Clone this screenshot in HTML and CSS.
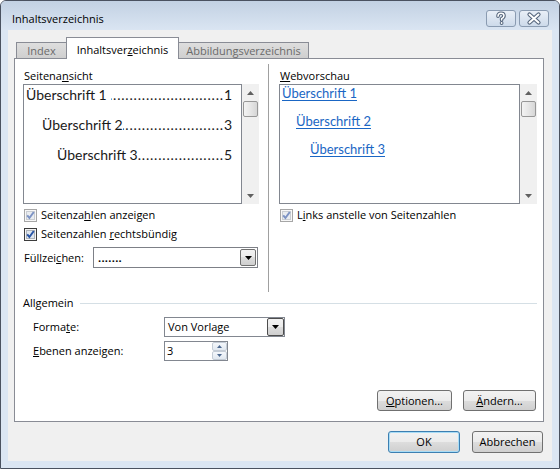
FILE: index.html
```html
<!DOCTYPE html>
<html lang="de">
<head>
<meta charset="utf-8">
<title>Inhaltsverzeichnis</title>
<link rel="stylesheet" href="styles.css">
</head>
<body>
<div class="window">
  <div class="titlebar">
    <span class="title">Inhaltsverzeichnis</span>
    <span class="tb-btn">
      <svg width="28" height="15" viewBox="0 0 28 15"><path d="M11 5.2Q11 2.2 14 2.2Q17 2.2 17 4.8Q17 6.6 14.6 7.6L14.6 9" fill="none" stroke="#56667c" stroke-width="3.6" stroke-linecap="round" stroke-linejoin="round"/><circle cx="14.6" cy="12" r="1.9" fill="#56667c"/><path d="M11 5.2Q11 2.2 14 2.2Q17 2.2 17 4.8Q17 6.6 14.6 7.6L14.6 9" fill="none" stroke="#fff" stroke-width="1.5" stroke-linecap="round" stroke-linejoin="round"/><circle cx="14.6" cy="12" r="0.9" fill="#fff"/></svg>
    </span>
    <span class="tb-btn">
      <svg width="28" height="15" viewBox="0 0 28 15"><path d="M9.5 3.5L18.5 11.5M18.5 3.5L9.5 11.5" stroke="#56667c" stroke-width="4.2" stroke-linecap="round"/><path d="M9.5 3.5L18.5 11.5M18.5 3.5L9.5 11.5" stroke="#fff" stroke-width="2" stroke-linecap="round"/></svg>
    </span>
  </div>
  <div class="client">
    <div class="tabs">
      <div class="tab tab-index">Index</div>
      <div class="tab tab-toc active">Inhaltsver<u>z</u>eichnis</div>
      <div class="tab tab-fig">Abbildungsverzeichnis</div>
    </div>
    <div class="panel">
      <div class="top">
        <div class="col col-left">
          <div class="label">Seitena<u>n</u>sicht</div>
          <div class="preview">
            <div class="listbox toc-box">
              <div class="toc l1"><span>Überschrift 1</span><span class="dots"></span><span>1</span></div>
              <div class="toc l2"><span>Überschrift 2</span><span class="dots"></span><span>3</span></div>
              <div class="toc l3"><span>Überschrift 3</span><span class="dots"></span><span>5</span></div>
            </div>
            <div class="scroll">
              <span class="arrow"><svg width="7" height="4" viewBox="0 0 7 4"><path d="M0 4L3.5 0L7 4Z" fill="#606060"/></svg></span>
              <span class="thumb"></span>
              <span class="arrow arrow-down"><svg width="7" height="4" viewBox="0 0 7 4"><path d="M0 0L7 0L3.5 4Z" fill="#606060"/></svg></span>
            </div>
          </div>
          <div class="chk">
            <svg width="13" height="13" viewBox="0 0 13 13"><rect x=".5" y=".5" width="12" height="12" fill="#f7f7f7" stroke="#a6a6a6"/><rect x="2.5" y="2.5" width="8" height="8" fill="#e9ecf0" stroke="#c9cdd2"/><path d="M3.2 6.4L5.4 9L9.8 3" fill="none" stroke="#7d93c4" stroke-width="2"/></svg>
            <span>Seitenza<u>h</u>len anzeigen</span>
          </div>
          <div class="chk">
            <svg width="13" height="13" viewBox="0 0 13 13"><rect x=".5" y=".5" width="12" height="12" fill="#f4f4f4" stroke="#3c3c3c"/><rect x="2.5" y="2.5" width="8" height="8" fill="#dfe6ee" stroke="#aeb3b9"/><path d="M3.2 6.4L5.4 9L9.8 3" fill="none" stroke="#2a56a6" stroke-width="2"/></svg>
            <span>Seitenzahlen <u>r</u>echtsbündig</span>
          </div>
          <div class="fill-row">
            <span class="fill-label">Füllzei<u>c</u>hen:</span>
            <div class="combo">
              <span class="combo-text">.......</span>
              <span class="drop">
                <svg width="7" height="4" viewBox="0 0 7 4"><path d="M0 0L7 0L3.5 4Z" fill="#000"/></svg>
              </span>
            </div>
          </div>
        </div>
        <div class="sep"></div>
        <div class="col col-right">
          <div class="label"><u>W</u>ebvorschau</div>
          <div class="preview">
            <div class="listbox web-box">
              <div class="web"><a>Überschrift 1</a></div>
              <div class="web w2"><a>Überschrift 2</a></div>
              <div class="web w3"><a>Überschrift 3</a></div>
            </div>
            <div class="scroll">
              <span class="arrow"><svg width="7" height="4" viewBox="0 0 7 4"><path d="M0 4L3.5 0L7 4Z" fill="#606060"/></svg></span>
              <span class="thumb"></span>
              <span class="arrow arrow-down"><svg width="7" height="4" viewBox="0 0 7 4"><path d="M0 0L7 0L3.5 4Z" fill="#606060"/></svg></span>
            </div>
          </div>
          <div class="chk">
            <svg width="13" height="13" viewBox="0 0 13 13"><rect x=".5" y=".5" width="12" height="12" fill="#f7f7f7" stroke="#a6a6a6"/><rect x="2.5" y="2.5" width="8" height="8" fill="#e9ecf0" stroke="#c9cdd2"/><path d="M3.2 6.4L5.4 9L9.8 3" fill="none" stroke="#7d93c4" stroke-width="2"/></svg>
            <span>L<u>i</u>nks anstelle von Seitenzahlen</span>
          </div>
        </div>
      </div>
      <div class="group">
        <span>Allgemein</span>
        <span class="hline"></span>
      </div>
      <div class="form">
        <span>Forma<u>t</u>e:</span>
        <div class="select">
          <span class="select-text">Von Vorlage</span>
          <span class="drop drop-dark">
            <svg width="7" height="4" viewBox="0 0 7 4"><path d="M0 0L7 0L3.5 4Z" fill="#000"/></svg>
          </span>
        </div>
        <span><u>E</u>benen anzeigen:</span>
        <div class="spin">
          <span class="spin-text">3</span>
          <span class="spin-btns">
            <span class="spin-btn"><svg width="5" height="3" viewBox="0 0 5 3"><path d="M0 3L2.5 0L5 3Z" fill="#4d6990"/></svg></span>
            <span class="spin-btn"><svg width="5" height="3" viewBox="0 0 5 3"><path d="M0 0L5 0L2.5 3Z" fill="#4d6990"/></svg></span>
          </span>
        </div>
      </div>
      <div class="panel-btns">
        <span class="btn btn-opt"><u>O</u>ptionen...</span>
        <span class="btn btn-mod"><u>Ä</u>ndern...</span>
      </div>
    </div>
    <div class="footer">
      <span class="btn btn-ok">OK</span>
      <span class="btn btn-cancel">Abbrechen</span>
    </div>
  </div>
</div>
</body>
</html>
```
FILE: styles.css
```css
* { box-sizing: border-box; }
html, body { margin: 0; background: #ffffff; }
body {
  font-family: "Open Sans", "Noto Sans", sans-serif;
  font-size: 11px;
  line-height: 16px;
  color: #000;
}
u { text-decoration: underline; text-underline-offset: 1px; }

.window {
  width: 560px;
  height: 469px;
  border: 1px solid #4a5260;
  border-radius: 6px 6px 0 0;
  background: #dbe6f3;
  display: flex;
  flex-direction: column;
  overflow: hidden;
}

.titlebar {
  height: 29px;
  flex: none;
  display: flex;
  align-items: flex-start;
  padding: 10px 10px 0 11px;
  background: linear-gradient(#c2d1e3, #dae5f2);
}
.title { flex: 1; }
.tb-btn {
  width: 30px;
  height: 17px;
  margin-top: -1px;
  margin-left: 3px;
  border: 1px solid #8a9bb1;
  border-radius: 3px;
  background: linear-gradient(#e9eff7, #cddaea);
  display: flex;
}

.client {
  flex: 1;
  margin: 0 7px 7px;
  background: #f0f0f0;
  display: flex;
  flex-direction: column;
}

.tabs {
  height: 28px;
  flex: none;
  display: flex;
  align-items: flex-end;
  padding-left: 8px;
  position: relative;
  z-index: 2;
}
.tab {
  height: 16px;
  border: 1px solid #898c95;
  border-bottom: 0;
  background: linear-gradient(#dedede, #cfcfcf);
  color: #6a6a6a;
  text-align: center;
  line-height: 15px;
  margin-left: -1px;
}
.tab-index { width: 51px; margin-left: 0; }
.tab-toc { width: 113px; }
.tab-fig { width: 131px; }
.tab.active {
  height: 22px;
  background: #fff;
  color: #000;
  margin-bottom: -1px;
  padding-top: 4px;
  position: relative;
  z-index: 1;
}

.panel {
  height: 364px;
  flex: none;
  margin: 0 8px 0 6px;
  border: 1px solid #898c95;
  background: #fff;
  display: flex;
  flex-direction: column;
}

.top {
  height: 233px;
  flex: none;
  display: flex;
  padding: 0 6px 0 8px;
}
.col { display: flex; flex-direction: column; padding-top: 8px; }
.col-left { width: 236px; }
.col-right { flex: 1; }
.sep {
  width: 1px;
  background: #a0a0a0;
  margin: 5px 10px 0 9px;
}

.label { height: 17px; line-height: 17px; padding-left: 1px; }

.preview { display: flex; height: 120px; flex: none; }
.listbox {
  flex: 1;
  border: 1px solid #828790;
  background: #fff;
  overflow: hidden;
}
.toc-box { padding: 0 9px 0 2px; }
.web-box { padding: 0 4px 0 2px; }

.scroll {
  width: 17px;
  background: #f0f0f0;
  display: flex;
  flex-direction: column;
  align-items: center;
}
.arrow {
  height: 17px;
  flex: none;
  display: flex;
  align-items: center;
  justify-content: center;
}
.arrow-down { margin-top: auto; }
.thumb {
  width: 15px;
  height: 16px;
  flex: none;
  border: 1px solid #979797;
  border-radius: 2px;
  background: linear-gradient(90deg, #f3f3f3, #e6e6e6 50%, #d6d6d6);
}

.toc {
  display: flex;
  font-family: Lato, "Open Sans", sans-serif;
  font-size: 14px;
  line-height: 20px;
  white-space: nowrap;
  color: #1a1a1a;
}
.toc + .toc { margin-top: 10px; }
.l1 .dots { margin-left: 4px; }
.l2 { padding-left: 16px; }
.l3 { padding-left: 31px; }
.dots { flex: 1; overflow: hidden; direction: rtl; }
.dots::before {
  content: "..............................................................................................";
  letter-spacing: 0.8px;
}

.web {
  font-family: Lato, "Open Sans", sans-serif;
  font-size: 13px;
  line-height: 17px;
  white-space: nowrap;
}
.web + .web { margin-top: 11px; }
.web a { color: #1a66c4; text-decoration: underline; text-underline-offset: 2px; }
.w2 { padding-left: 14px; }
.w3 { padding-left: 28px; }

.chk {
  display: flex;
  align-items: center;
  gap: 4px;
  height: 16px;
  margin-top: 3px;
  padding-left: 1px;
}
.chk svg { flex: none; }

.fill-row {
  display: flex;
  align-items: center;
  height: 21px;
  margin-top: 5px;
}
.fill-label { width: 70px; padding-left: 1px; }
.combo {
  width: 165px;
  height: 21px;
  border: 1px solid #7d8087;
  display: flex;
  align-items: center;
  padding-left: 4px;
}
.combo-text { flex: 1; font-weight: bold; letter-spacing: 0.3px; }
.drop {
  width: 16px;
  height: 17px;
  margin-right: 1px;
  border: 1px solid #707070;
  border-radius: 2px;
  background: linear-gradient(#f2f2f2, #ebebeb 50%, #dddddd 50%, #cfcfcf);
  display: flex;
  align-items: center;
  justify-content: center;
}

.group {
  display: flex;
  align-items: center;
  height: 16px;
  margin-top: 3px;
  padding: 0 6px 0 8px;
}
.hline { flex: 1; height: 1px; background: #d5dfe5; margin-left: 6px; }

.form {
  display: grid;
  grid-template-columns: 131px auto;
  row-gap: 4px;
  align-items: center;
  justify-items: start;
  margin-top: 6px;
  padding-left: 18px;
}
.select {
  width: 121px;
  height: 20px;
  border: 1px solid #828790;
  display: flex;
  align-items: center;
  padding-left: 3px;
}
.select-text { flex: 1; }
.drop-dark {
  width: 17px;
  height: 18px;
  margin-right: 0;
  border-color: #4d4d4d;
}
.spin {
  width: 64px;
  height: 20px;
  border: 1px solid #828790;
  display: flex;
  align-items: center;
  padding-left: 2px;
}
.spin-text { flex: 1; }
.spin-btns {
  width: 15px;
  height: 18px;
  display: flex;
  flex-direction: column;
}
.spin-btn {
  height: 9px;
  border: 1px solid #c4ccd6;
  border-radius: 2px;
  background: linear-gradient(#f4f7fb, #e1e8f0);
  display: flex;
  align-items: center;
  justify-content: center;
}

.panel-btns {
  margin-top: auto;
  display: flex;
  justify-content: flex-end;
  gap: 11px;
  padding: 0 7px 10px 0;
}
.btn {
  height: 21px;
  border: 1px solid #707070;
  border-radius: 3px;
  background: linear-gradient(#f2f2f2, #ebebeb 50%, #dddddd 50%, #cfcfcf);
  display: flex;
  align-items: center;
  justify-content: center;
}
.btn-opt { width: 75px; }
.btn-mod { width: 73px; }

.footer {
  display: flex;
  justify-content: flex-end;
  gap: 12px;
  padding: 9px 9px 0 0;
}
.footer .btn { height: 22px; }
.btn-ok {
  width: 72px;
  border-color: #3c7fb1;
  box-shadow: inset 0 0 0 1px #a8dcf6;
}
.btn-cancel { width: 71px; }
```
